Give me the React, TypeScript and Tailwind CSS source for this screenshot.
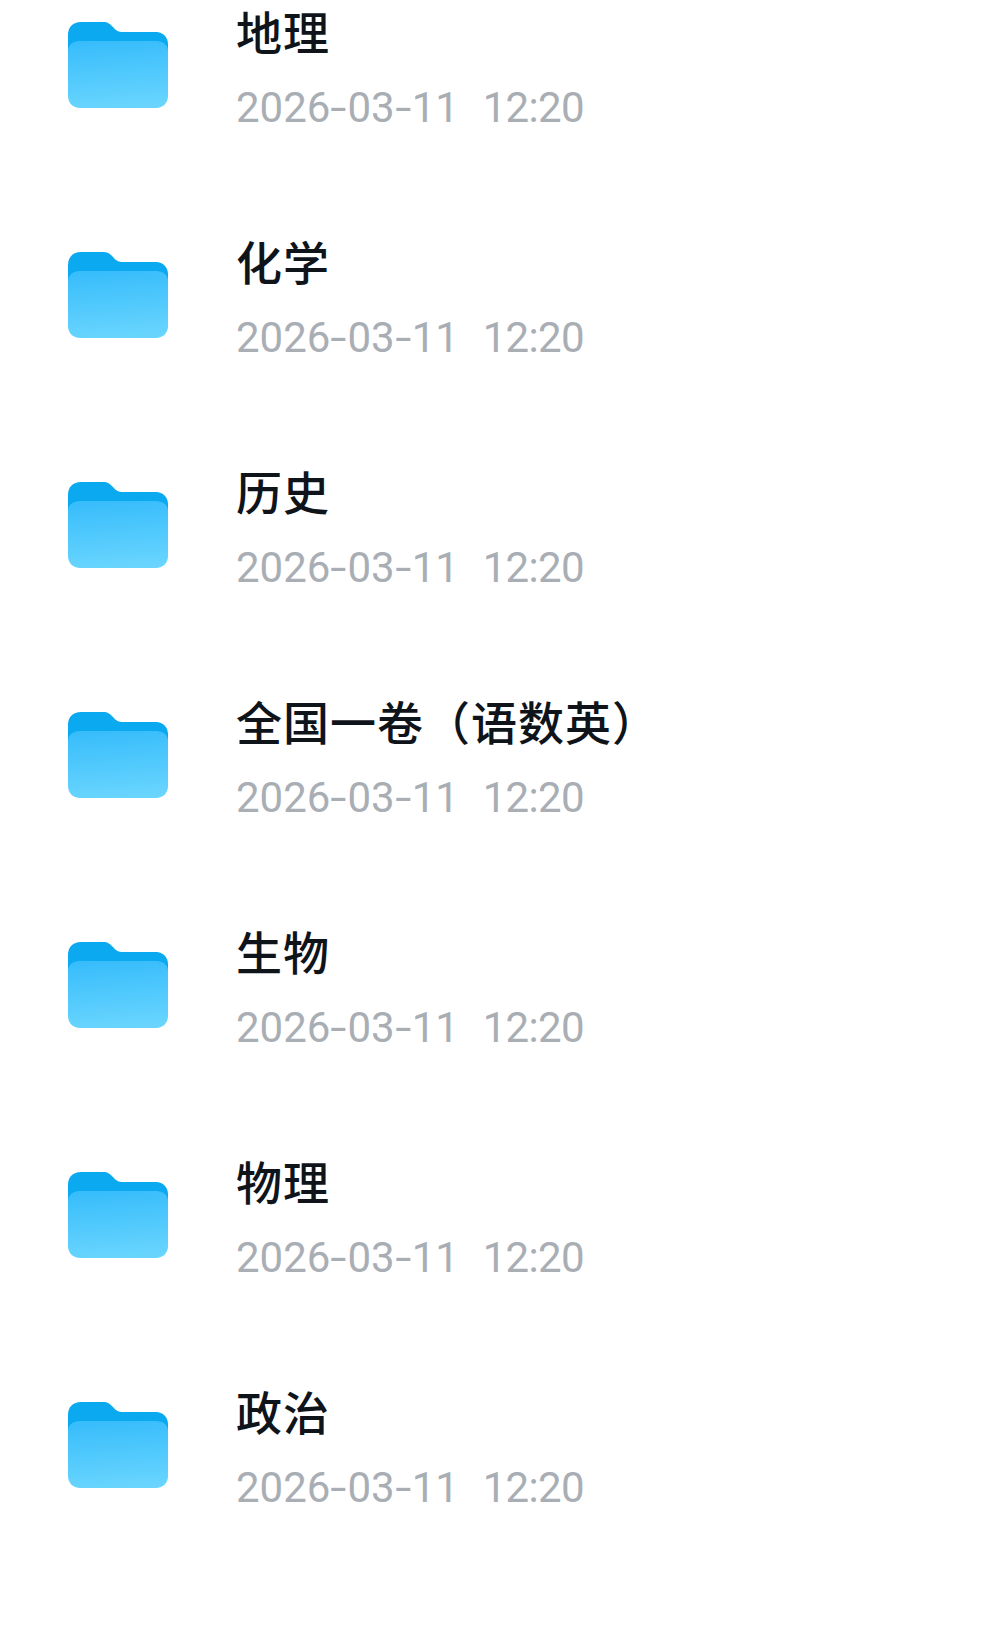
const rows = ['地理', '化学', '历史', '全国一卷（语数英）', '生物', '物理', '政治'];

function FolderIcon() {
  return (
    <svg width="100" height="88" viewBox="0 0 100 88" className="shrink-0">
      <defs>
        <linearGradient id="folderFront" x1="0.4" y1="0" x2="0.5" y2="1">
          <stop offset="0" stopColor="#38bdfb" />
          <stop offset="1" stopColor="#69d5fe" />
        </linearGradient>
      </defs>
      <path d="M0 14C0 6 5 1 13 1H35C40 1 42 3 45 6C48 10 51 11 55 11H88C95 11 100 16 100 23V50H0Z" fill="#0aa9f0" />
      <path d="M0 30C0 24 5 20 12 20H88C95 20 100 24 100 30V75C100 82 95 87 88 87H12C5 87 0 82 0 75Z" fill="url(#folderFront)" />
    </svg>
  );
}

// the hyphens in the date are longer than Roboto's
function Dash() {
  return <span className="inline-block w-[17px] text-center scale-x-[1.4]">-</span>;
}

export default function App() {
  return (
    <div className="w-[982px] h-[1638px] overflow-hidden bg-white">
      <div className="flex flex-col">
        {rows.map((name, i) => (
          <div key={i} className="h-[230px] flex items-start pl-[68px] pt-[21px]">
            <FolderIcon />
            <div className="ml-[68px] -mt-[21px]">
              <div className="h-[60px] leading-[60px] text-[46px] tracking-[1px] font-medium text-[#0f141a] font-['Noto_Sans_CJK_SC',sans-serif]">{name}</div>
              <div className="mt-[18px] h-[60px] leading-[60px] text-[42px] text-[#a9aeb5] font-['Roboto',sans-serif] whitespace-pre">
                2026<Dash />03<Dash />11{'  '}<span className="ml-[3px] tracking-[-0.7px]">12:20</span>
              </div>
            </div>
          </div>
        ))}
      </div>
    </div>
  );
}
